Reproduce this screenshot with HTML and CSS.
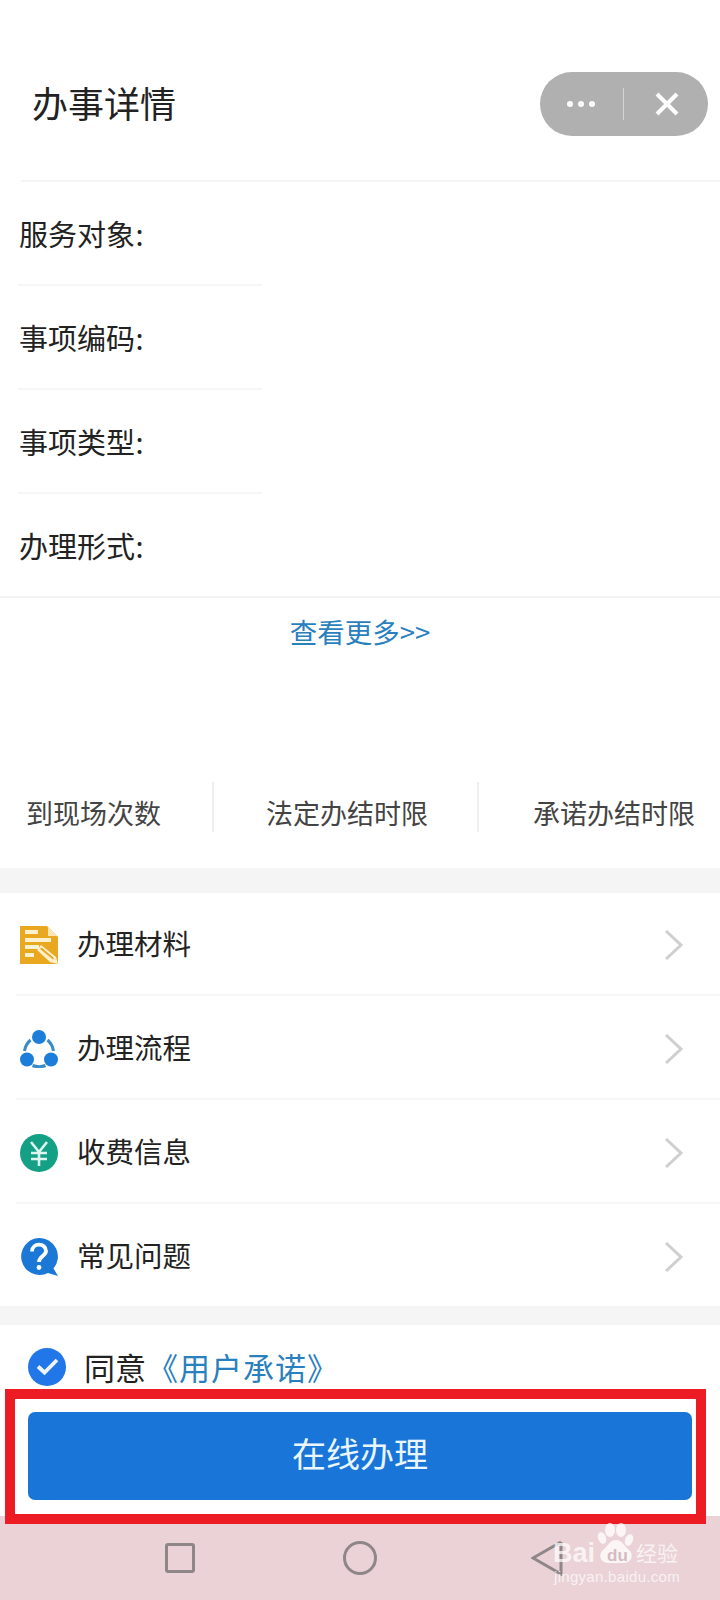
FILE: index.html
```html
<!DOCTYPE html>
<html lang="zh-CN">
<head>
<meta charset="utf-8">
<title>办事详情</title>
<link rel="stylesheet" href="styles.css">
</head>
<body>
<div class="page">
  <header class="header">
    <h1 class="title">办事详情</h1>
    <div class="capsule">
      <svg class="cap-more" width="28" height="8" viewBox="0 0 28 8"><circle cx="3" cy="4" r="3"/><circle cx="14" cy="4" r="3"/><circle cx="25" cy="4" r="3"/></svg>
      <span class="cap-div"></span>
      <svg class="cap-close" width="24" height="24" viewBox="0 0 24 24"><path d="M2 2 22 22M22 2 2 22"/></svg>
    </div>
  </header>

  <section class="fields">
    <div class="field">服务对象 :</div>
    <div class="field">事项编码 :</div>
    <div class="field">事项类型 :</div>
    <div class="field field-last">办理形式 :</div>
  </section>

  <a class="more">查看更多&gt;&gt;</a>

  <section class="stats">
    <div class="stat stat-a">到现场次数</div>
    <div class="stat stat-b">法定办结时限</div>
    <div class="stat stat-c">承诺办结时限</div>
  </section>

  <div class="band band-top"></div>

  <section class="menu">
    <div class="menu-row menu-row-first">
      <svg class="menu-icon" viewBox="0 0 38 38">
        <path fill="#e9a820" d="M0 0H27L38 11V38H0Z"/>
        <path fill="#fbe6b8" d="M28 1 37 10H28Z"/>
        <path fill="#fff0cf" d="M5 4H18V8H5ZM5 12H31V16H5ZM5 19H19V23H5ZM5 27H14V31H5Z"/>
        <path fill="#fff0cf" d="M17 24 21 19 36 31 38 38 30 36Z"/>
        <path fill="#e9a820" d="M20 23 21.500 21.500 34 32 33 33.500Z"/>
      </svg>
      <span class="menu-text">办理材料</span>
      <svg class="chev" width="20" height="32" viewBox="0 0 20 32"><path d="M2 2 17 16 2 30"/></svg>
    </div>
    <div class="menu-row">
      <svg class="menu-icon" viewBox="0 0 38 38">
        <circle fill="#1c7ed9" cx="19" cy="7" r="7"/>
        <circle fill="#1c7ed9" cx="7" cy="29.500" r="7"/>
        <circle fill="#1c7ed9" cx="31" cy="29.500" r="7"/>
        <path fill="none" stroke="#3a8bc9" stroke-width="3" d="M10.500 10A18 18 0 0 0 4.500 21M27.500 10A18 18 0 0 1 33.500 21M12.500 35.500A18 18 0 0 0 25.500 35.500"/>
      </svg>
      <span class="menu-text">办理流程</span>
      <svg class="chev" width="20" height="32" viewBox="0 0 20 32"><path d="M2 2 17 16 2 30"/></svg>
    </div>
    <div class="menu-row">
      <svg class="menu-icon" viewBox="0 0 38 38">
        <circle fill="#14a085" cx="19" cy="19" r="19"/>
        <path fill="none" stroke="#dff5f0" stroke-width="2.600" d="M11 8 19 18 27 8M19 18V32M11 19H27M11 25H27"/>
      </svg>
      <span class="menu-text">收费信息</span>
      <svg class="chev" width="20" height="32" viewBox="0 0 20 32"><path d="M2 2 17 16 2 30"/></svg>
    </div>
    <div class="menu-row menu-row-last">
      <svg class="menu-icon" viewBox="0 0 38 38">
        <path fill="#1c78d6" d="M19 0A18.500 18.500 0 1 0 28 35L38 38 33.500 30.500A18.500 18.500 0 0 0 19 0Z"/>
        <path fill="none" stroke="#fff" stroke-width="3.800" d="M12 13.500C12 4.500 26 4.500 26 13C26 18 19 18 19 24"/>
        <circle fill="#fff" cx="19" cy="29.500" r="2.400"/>
      </svg>
      <span class="menu-text">常见问题</span>
      <svg class="chev" width="20" height="32" viewBox="0 0 20 32"><path d="M2 2 17 16 2 30"/></svg>
    </div>
  </section>

  <div class="band band-bottom"></div>

  <section class="agree">
    <svg class="agree-check" viewBox="0 0 38 38">
      <circle fill="#2176e8" cx="19" cy="19" r="19"/>
      <path fill="none" stroke="#eef5ff" stroke-width="3.800" d="M10 18.500 16.500 24.500 29 12"/>
    </svg>
    <span class="agree-text">同意 <span class="agree-link">《用户承诺》</span></span>
  </section>

  <div class="action"><button class="primary">在线办理</button></div>

  <nav class="nav">
    <span class="nav-square"></span>
    <span class="nav-circle"></span>
    <svg class="nav-back" width="32" height="36" viewBox="0 0 32 36"><path d="M30 2 2 18 30 34V2"/></svg>
  </nav>

  <div class="highlight"></div>

  <div class="watermark">
    <svg class="wm-paw" width="44" height="44" viewBox="0 0 44 44">
      <ellipse cx="14" cy="8" rx="5" ry="7"/>
      <ellipse cx="25" cy="8" rx="5" ry="7"/>
      <ellipse cx="6" cy="16" rx="4" ry="6" transform="rotate(-20 6 16)"/>
      <ellipse cx="33" cy="18" rx="4" ry="6" transform="rotate(20 33 18)"/>
      <path d="M20 18C14 18 12 24 7 28C2 32 4 41 12 41H28C36 41 38 32 33 28C28 24 26 18 20 18Z"/>
    </svg>
    <span class="wm-bai">Bai</span>
    <span class="wm-du">du</span>
    <span class="wm-jy">经验</span>
    <span class="wm-url">jingyan.baidu.com</span>
  </div>
</div>
</body>
</html>
```
FILE: styles.css
```css
* { box-sizing: border-box; }
html, body { margin: 0; padding: 0; background: #fff; }
body { font-family: "Noto Sans CJK SC", "Noto Sans", sans-serif; color: #222; text-spacing-trim: space-all; }
.page { position: relative; width: 720px; height: 1600px; overflow: hidden; background: #fff; }

.header { height: 182px; margin-left: 21px; padding: 72px 12px 0 11px; display: flex; justify-content: space-between; align-items: flex-start; border-bottom: 2px solid #f5f5f5; }
.title { margin: 0; font-size: 36px; font-weight: 400; line-height: 60px; color: #222; }
.capsule { width: 168px; height: 64px; border-radius: 32px; background: #b0b0b0; display: flex; align-items: center; padding-left: 27px; }
.cap-more { fill: #fff; }
.cap-div { width: 1px; height: 32px; margin: 0 31px 0 28px; background: #d4d4d4; }
.cap-close { fill: none; stroke: #fff; stroke-width: 4; }

.fields { border-bottom: 2px solid #f3f3f3; }
.field { height: 104px; width: 244px; margin-left: 18px; padding: 0 0 1px 1px; display: flex; align-items: center; font-size: 29px; line-height: 40px; color: #222; border-bottom: 2px solid #f6f6f6; white-space: pre; word-spacing: -6px; }
.field-last { border-bottom: 0; height: 102px; }

.more { display: block; height: 70px; padding-top: 13px; text-align: center; font-size: 27.500px; line-height: 40px; color: #2a7fbd; }

.stats { height: 86px; margin-top: 114px; display: flex; align-items: flex-start; }
.stat { height: 50px; font-size: 27px; line-height: 61px; color: #444; white-space: nowrap; }
.stat-a { width: 214px; padding-left: 26px; border-right: 2px solid #eeeeee; }
.stat-b { width: 265px; padding-left: 52px; border-right: 2px solid #eeeeee; }
.stat-c { padding-left: 54px; }

.band { background: #f5f5f5; }
.band-top { height: 25px; }
.band-bottom { height: 19px; }

.menu-row { height: 104px; margin-left: 16px; padding: 4px 36px 0 4px; display: flex; align-items: center; border-bottom: 2px solid #f6f6f6; }
.menu-row-first { height: 103px; padding-top: 3px; }
.menu-row-last { height: 102px; padding-top: 4px; border-bottom: 0; }
.menu-icon { width: 38px; height: 38px; flex: none; }
.menu-text { margin-left: 19px; padding-bottom: 4px; flex: 1; font-size: 28.500px; line-height: 40px; color: #222; }
.chev { fill: none; stroke: #cfcfcf; stroke-width: 3; }

.agree { height: 87px; padding: 23px 0 0 28px; display: flex; align-items: flex-start; }
.agree-check { width: 38px; height: 38px; flex: none; }
.agree-text { margin-left: 18px; font-size: 31px; line-height: 38px; color: #222; white-space: pre; word-spacing: -8px; }
.agree-link { color: #2a7fbd; letter-spacing: 1px; margin-left: 2px; }

.action { height: 104px; padding: 0 28px 16px; }
.primary { display: block; width: 100%; height: 88px; padding: 0 0 8px; border: 0; border-radius: 7px; background: #1976d8; color: #eaf6ff; font-family: inherit; font-size: 34px; }

.nav { height: 84px; padding-left: 165px; display: flex; align-items: center; background: #ead2d7; }
.nav-square { width: 30px; height: 30px; border: 3px solid #8f8688; border-radius: 3px; }
.nav-circle { width: 34px; height: 34px; margin-left: 148px; border: 3px solid #8f8688; border-radius: 50%; }
.nav-back { margin-left: 154px; fill: none; stroke: #8f8688; stroke-width: 3; }

.highlight { position: absolute; left: 5px; top: 1389px; width: 701px; height: 135px; border: 10px solid #ed1c24; pointer-events: none; }

.watermark { position: absolute; left: 553px; top: 1522px; width: 130px; height: 62px; color: rgba(255, 255, 255, 0.72); }
.wm-paw { position: absolute; left: 43px; top: 0; fill: rgba(255, 255, 255, 0.78); }
.wm-bai { position: absolute; left: 0; top: 15px; font-family: "Liberation Sans", sans-serif; font-weight: 700; font-size: 27px; line-height: 32px; }
.wm-du { position: absolute; left: 54px; top: 25px; font-family: "Liberation Sans", sans-serif; font-weight: 700; font-size: 17px; line-height: 18px; color: #d3bcc1; }
.wm-jy { position: absolute; left: 83px; top: 15px; font-size: 21px; line-height: 30px; }
.wm-url { position: absolute; left: 1px; top: 47px; font-family: "Liberation Sans", sans-serif; font-size: 15px; line-height: 16px; letter-spacing: 0.300px; white-space: nowrap; }
```
